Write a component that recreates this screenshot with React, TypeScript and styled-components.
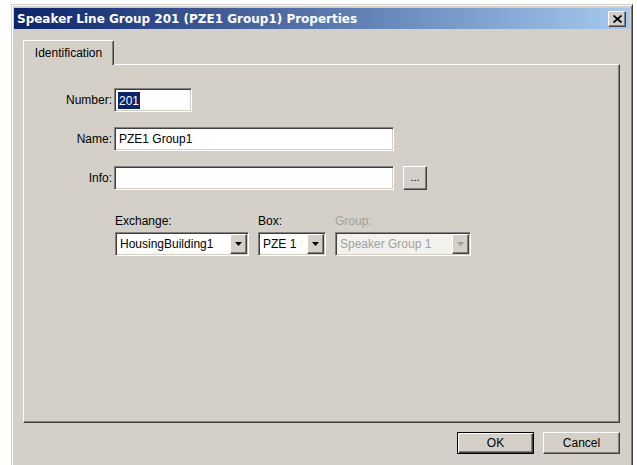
import React from 'react';
import styled, { createGlobalStyle } from 'styled-components';

const GlobalStyle = createGlobalStyle`
  html, body {
    margin: 0;
    padding: 0;
    background: #fff;
    overflow: hidden;
  }
  body {
    font-family: "Liberation Sans", Arial, sans-serif;
    font-size: 12px;
    color: #000;
  }
`;

// classic 3D edges
const raisedEdge = `
  border-top: 1px solid #fff;
  border-left: 1px solid #fff;
  border-right: 1px solid #404040;
  border-bottom: 1px solid #404040;
  box-shadow: inset -1px -1px #808080;
`;

const sunkenEdge = `
  border-top: 1px solid #808080;
  border-left: 1px solid #808080;
  border-right: 1px solid #fff;
  border-bottom: 1px solid #fff;
  box-shadow: inset 1px 1px #404040, inset -1px -1px #d4d0c8;
`;

const Window = styled.div`
  margin: 4px 0 0 11px;
  width: 622px;
  height: 480px;
  box-sizing: border-box;
  background: #d4d0c8;
  border-top: 1px solid #d4d0c8;
  border-left: 1px solid #d4d0c8;
  border-right: 1px solid #404040;
  border-bottom: 1px solid #404040;
  box-shadow: inset 1px 1px #fff, inset -1px -1px #808080;
  padding: 3px 2px 2px 2px;
  display: flex;
  flex-direction: column;
`;

const TitleBar = styled.div`
  height: 21px;
  display: flex;
  align-items: center;
  padding: 0 4px 0 3px;
  background: linear-gradient(to right, #0a246a, #a6caf0);
`;

const Title = styled.div`
  flex: 1;
  color: #fff;
  font-family: "DejaVu Sans", Verdana, sans-serif;
  font-weight: bold;
  font-size: 12px;
  white-space: nowrap;
`;

const CloseButton = styled.div`
  width: 18px;
  height: 16px;
  box-sizing: border-box;
  background: #d4d0c8;
  ${raisedEdge}
  display: flex;
  align-items: center;
  justify-content: center;
`;

const Body = styled.div`
  flex: 1;
  display: flex;
  flex-direction: column;
  padding: 11px 10px 0 9px;
`;

const TabStrip = styled.div`
  display: flex;
`;

const Tab = styled.div`
  position: relative;
  z-index: 1;
  width: 91px;
  height: 25px;
  box-sizing: border-box;
  margin-bottom: -1px;
  background: #d4d0c8;
  border-top: 1px solid #fff;
  border-left: 1px solid #fff;
  border-right: 1px solid #404040;
  border-radius: 2px 2px 0 0;
  box-shadow: inset -1px 0 #808080;
  display: flex;
  align-items: center;
  justify-content: center;
  padding-bottom: 1px;
`;

const Panel = styled.div`
  height: 359px;
  box-sizing: border-box;
  border-top: 1px solid #fff;
  border-left: 1px solid #fff;
  border-right: 1px solid #404040;
  border-bottom: 1px solid #404040;
  box-shadow: inset -1px -1px #808080;
  padding: 23px 0 0 0;
  display: flex;
  flex-direction: column;
`;

const Row = styled.div`
  display: flex;
  align-items: center;
  margin-bottom: 15px;
`;

const RowLabel = styled.div`
  width: 88px;
  margin-right: 2px;
  text-align: right;
  white-space: nowrap;
`;

const TextBox = styled.div<{ w: number }>`
  width: ${({ w }) => w}px;
  height: 24px;
  box-sizing: border-box;
  background: #fff;
  ${sunkenEdge}
  padding: 0 3px 0 4px;
  display: flex;
  align-items: center;
  white-space: nowrap;
`;

const Selected = styled.span`
  background: #0a246a;
  color: #fff;
  margin-left: -1px;
  padding: 2px 1px 1px;
`;

const BrowseButton = styled.div`
  width: 24px;
  height: 24px;
  margin-left: 9px;
  box-sizing: border-box;
  background: #d4d0c8;
  ${raisedEdge}
  display: flex;
  align-items: center;
  justify-content: center;
  font-size: 11px;
  padding-bottom: 2px;
`;

const ComboGroup = styled.div`
  display: flex;
  gap: 9px;
  margin: 9px 0 0 91px;
`;

const ComboField = styled.div`
  display: flex;
  flex-direction: column;
  gap: 4px;
`;

const ComboLabel = styled.div<{ disabled?: boolean }>`
  line-height: 14px;
  color: ${({ disabled }) => (disabled ? '#a0a0a0' : '#000')};
`;

const ComboBox = styled.div<{ w: number; disabled?: boolean }>`
  width: ${({ w }) => w}px;
  height: 24px;
  box-sizing: border-box;
  background: ${({ disabled }) => (disabled ? '#f2f1ee' : '#fff')};
  color: ${({ disabled }) => (disabled ? '#a0a0a0' : '#000')};
  ${sunkenEdge}
  padding: 1px 1px 1px 4px;
  display: flex;
  align-items: center;
`;

const ComboText = styled.div`
  flex: 1;
  white-space: nowrap;
  overflow: hidden;
`;

const DropButton = styled.div`
  width: 17px;
  height: 100%;
  box-sizing: border-box;
  background: #d4d0c8;
  ${raisedEdge}
  display: flex;
  align-items: center;
  justify-content: center;
`;

const Footer = styled.div`
  display: flex;
  justify-content: flex-end;
  gap: 9px;
  margin-top: 9px;
`;

const DialogButton = styled.div<{ primary?: boolean }>`
  width: 77px;
  height: 22px;
  box-sizing: border-box;
  background: #d4d0c8;
  display: flex;
  align-items: center;
  justify-content: center;
  ${({ primary }) =>
    primary
      ? `border: 1px solid #000;
         box-shadow: inset 1px 1px #fff, inset -1px -1px #404040, inset -2px -2px #808080;`
      : raisedEdge}
`;

const Arrow = ({ color = '#000' }: { color?: string }) => (
  <svg width="7" height="4" viewBox="0 0 7 4">
    <path d="M0 0h7L3.5 4z" fill={color} />
  </svg>
);

const CloseGlyph = () => (
  <svg width="9" height="8" viewBox="0 0 9 8">
    <path d="M0.5 0.5L8.5 7.5M8.5 0.5L0.5 7.5" stroke="#000" strokeWidth="1.8" />
  </svg>
);

const App = () => (
  <>
    <GlobalStyle />
    <Window>
      <TitleBar>
        <Title>Speaker Line Group 201 (PZE1 Group1) Properties</Title>
        <CloseButton>
          <CloseGlyph />
        </CloseButton>
      </TitleBar>
      <Body>
        <TabStrip>
          <Tab>Identification</Tab>
        </TabStrip>
        <Panel>
          <Row>
            <RowLabel>Number:</RowLabel>
            <TextBox w={78}>
              <Selected>201</Selected>
            </TextBox>
          </Row>
          <Row>
            <RowLabel>Name:</RowLabel>
            <TextBox w={280}>PZE1 Group1</TextBox>
          </Row>
          <Row>
            <RowLabel>Info:</RowLabel>
            <TextBox w={280} />
            <BrowseButton>...</BrowseButton>
          </Row>
          <ComboGroup>
            <ComboField>
              <ComboLabel>Exchange:</ComboLabel>
              <ComboBox w={134}>
                <ComboText>HousingBuilding1</ComboText>
                <DropButton>
                  <Arrow />
                </DropButton>
              </ComboBox>
            </ComboField>
            <ComboField>
              <ComboLabel>Box:</ComboLabel>
              <ComboBox w={68}>
                <ComboText>PZE 1</ComboText>
                <DropButton>
                  <Arrow />
                </DropButton>
              </ComboBox>
            </ComboField>
            <ComboField>
              <ComboLabel disabled>Group:</ComboLabel>
              <ComboBox w={136} disabled>
                <ComboText>Speaker Group 1</ComboText>
                <DropButton>
                  <Arrow color="#a0a0a0" />
                </DropButton>
              </ComboBox>
            </ComboField>
          </ComboGroup>
        </Panel>
        <Footer>
          <DialogButton primary>OK</DialogButton>
          <DialogButton>Cancel</DialogButton>
        </Footer>
      </Body>
    </Window>
  </>
);

export default App;
